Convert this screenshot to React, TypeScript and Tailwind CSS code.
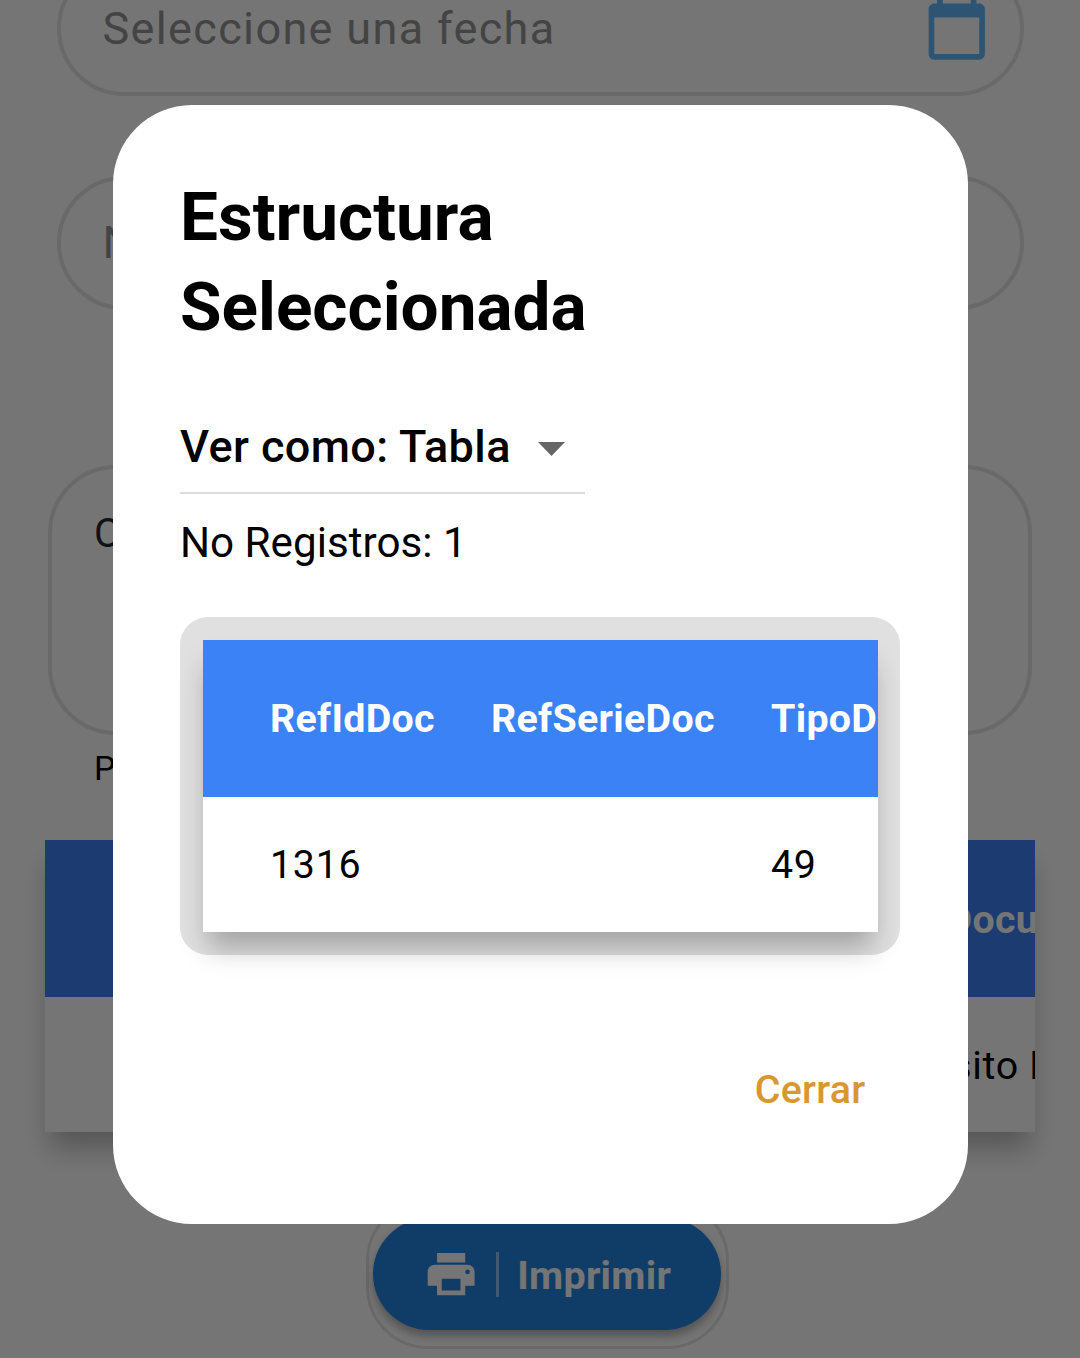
import React from "react";

const TABLE_SHADOW = "shadow-[0_21px_26px_-5px_rgba(0,0,0,0.27)]";

function CalendarIcon() {
  return (
    <svg viewBox="0 0 24 24" className="mt-px h-[67.5px] w-[67.5px] shrink-0 fill-[#62b9fa]">
      <path d="M20 3h-1V1h-2v2H7V1H5v2H4c-1.1 0-2 .9-2 2v16c0 1.1.9 2 2 2h16c1.1 0 2-.9 2-2V5c0-1.1-.9-2-2-2zm0 18H4V8h16v13z" />
    </svg>
  );
}

function PrintIcon() {
  return (
    <svg viewBox="0 0 24 24" className="h-[56.25px] w-[56.25px] shrink-0 fill-white">
      <path d="M19 8H5c-1.66 0-3 1.34-3 3v6h4v4h12v-4h4v-6c0-1.66-1.34-3-3-3zm-3 11H8v-5h8v5zm3-7c-.55 0-1-.45-1-1s.45-1 1-1 1 .45 1 1-.45 1-1 1zm-1-9H6v4h12V3z" />
    </svg>
  );
}

function FormPage() {
  return (
    <div className="flex h-full flex-col">
      <div className="mx-[56.5px] mt-[-39px] flex h-[135px] shrink-0 items-center justify-between rounded-full border-4 border-[#e4e4e4] pr-[29.500px] pl-[42px]">
        <span className="pt-px text-[45px] leading-[54px] tracking-[1.35px] text-[#949494]">Seleccione una fecha</span>
        <CalendarIcon />
      </div>

      <div className="mx-[56.5px] mt-20 flex h-[134px] shrink-0 items-center rounded-full border-4 border-[#e4e4e4] pl-[42px]">
        <span className="text-[45px] leading-[54px] tracking-[1.4px] text-[#949494]">No. Documento</span>
      </div>

      <div className="mx-12 mt-[155px] h-[270px] shrink-0 rounded-[68px] border-4 border-[#e4e4e4] px-[42px] pt-[41px]">
        <span className="block text-[40px] leading-[48px] text-[#1f2937]">Comentario</span>
      </div>

      <p className="mt-[14px] ml-[94px] shrink-0 text-[33.75px] leading-[40px] text-black">Productos</p>

      <div className={`mx-[45px] mt-[51px] flex h-[292px] shrink-0 flex-col bg-white ${TABLE_SHADOW}`}>
        <div className="flex h-[157px] items-center justify-end overflow-hidden bg-[#3b82f6]">
          <span className="mr-[-117px] pt-[2px] text-[39.375px] font-bold tracking-[0.3px] text-white">TipoDocumento</span>
        </div>
        <div className="flex h-[135px] items-center justify-end overflow-hidden">
          <span className="mr-[-155px] pt-[2px] text-[39.375px] tracking-[0.7px] text-black">Depósito Bancario</span>
        </div>
      </div>

      <div className="mt-[67px] ml-[14px] flex h-[150px] w-[363px] shrink-0 items-center justify-center self-center rounded-[62px] border-[3px] border-[#e4e4e4]">
        <button className="flex h-[112.5px] w-[348px] items-center rounded-full bg-[#2185e2] pl-[50px] shadow-[0_6px_10px_rgba(0,0,0,0.3)]">
          <PrintIcon />
          <span className="ml-[17px] h-[45px] w-[3px] bg-white/50" />
          <span className="ml-[18px] pt-[3px] text-[39.375px] font-bold tracking-[0.3px] text-white">Imprimir</span>
        </button>
      </div>
    </div>
  );
}

function StructureDialog() {
  return (
    <div className="flex h-[1119.5px] w-[855px] flex-col rounded-[79px] bg-white px-[67.5px] pt-[67.5px] text-black">
      <h1 className="text-[67.5px] leading-[90px] font-bold">
        Estructura
        <br />
        Seleccionada
      </h1>

      <div className="mt-[56px] flex h-[86px] w-[405px] items-center border-b-2 border-[#dcdcdc]">
        <span className="pb-[6px] text-[45px] leading-[68px] font-medium tracking-[0.4px] whitespace-nowrap">
          Ver como: Tabla
        </span>
        <svg viewBox="0 0 27 14" className="mr-5 mb-[2px] ml-auto h-[14px] w-[27px] fill-[#666]">
          <path d="M0 0h27L13.500 14z" />
        </svg>
      </div>

      <p className="mt-[19px] text-[42.2px] leading-[60px]">No Registros: 1</p>

      <div className="mt-[44px] h-[337.5px] rounded-[28px] bg-[#e0e0e0] p-[22.5px]">
        <div className={`flex h-[292px] flex-col bg-white ${TABLE_SHADOW}`}>
          <div className="grid h-[157px] grid-cols-[221px_280px_300px] items-center overflow-hidden bg-[#3b82f6] pt-[2px] pl-[67.5px] text-[39.375px] font-bold tracking-[0.3px] text-white">
            <span>RefIdDoc</span>
            <span>RefSerieDoc</span>
            <span>TipoDoc</span>
          </div>
          <div className="grid h-[135px] grid-cols-[221px_280px_300px] items-center overflow-hidden pt-[2px] pl-[67.5px] text-[39.375px] tracking-[0.7px]">
            <span>1316</span>
            <span />
            <span>49</span>
          </div>
        </div>
      </div>

      <button className="mt-[103px] mr-[34.5px] self-end text-[39.375px] leading-[64px] font-medium tracking-[0.3px] text-[#d99632]">
        Cerrar
      </button>
    </div>
  );
}

export default function App() {
  return (
    <div className="relative h-[1358px] w-[1080px] overflow-hidden bg-white font-['Roboto',sans-serif]">
      <FormPage />
      <div className="absolute inset-0 flex items-start justify-center bg-black/54 pt-[104.5px]">
        <StructureDialog />
      </div>
    </div>
  );
}
